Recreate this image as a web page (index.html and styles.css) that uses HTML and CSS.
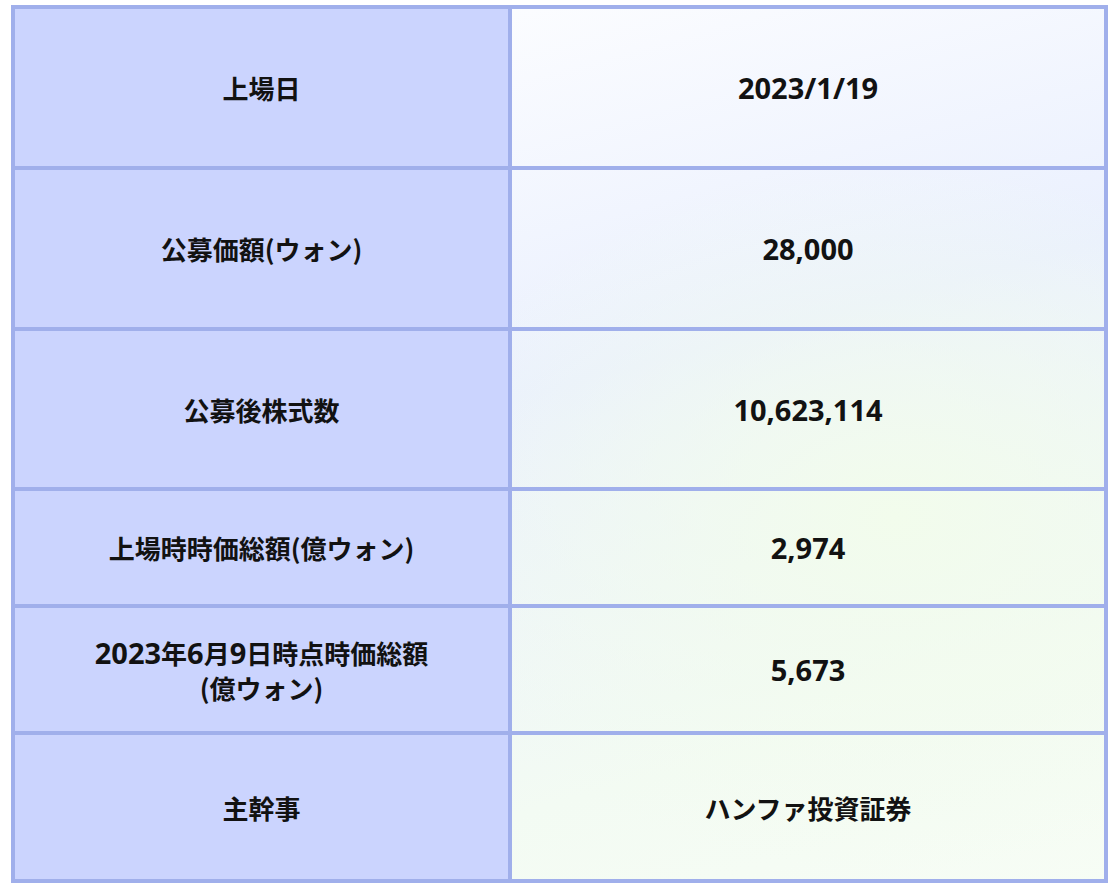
FILE: index.html
```html
<!DOCTYPE html>
<html lang="ja">
<head>
<meta charset="utf-8">
<link rel="stylesheet" href="styles.css">
</head>
<body>
<div class="table">
  <div class="cell label r1">上場日</div>
  <div class="cell value r1"><span class="lat">2023/1/19</span></div>
  <div class="cell label r2">公募価額(ウォン)</div>
  <div class="cell value r2"><span class="lat">28,000</span></div>
  <div class="cell label r3">公募後株式数</div>
  <div class="cell value r3"><span class="lat">10,623,114</span></div>
  <div class="cell label r4">上場時時価総額(億ウォン)</div>
  <div class="cell value r4"><span class="lat">2,974</span></div>
  <div class="cell label r5"><span class="lines"><span class="line"><span class="lat">2023</span>年<span class="lat">6</span>月<span class="lat">9</span>日時点時価総額</span><span class="line">(億ウォン)</span></span></div>
  <div class="cell value r5"><span class="lat">5,673</span></div>
  <div class="cell label r6">主幹事</div>
  <div class="cell value r6">ハンファ投資証券</div>
</div>
</body>
</html>
```
FILE: styles.css
```css
html, body {
  margin: 0;
  padding: 0;
  background: #ffffff;
}
body {
  padding: 5px 11px 0 11px;
  font-family: "Noto Sans CJK JP", "Noto Sans", sans-serif;
}
.table {
  width: 1097px;
  display: grid;
  grid-template-columns: 493px 592px;
  grid-template-rows: 157px 157px 156px 113px 123px 144px;
  gap: 4px;
  padding: 4px;
  box-sizing: border-box;
  background: #a0afeb;
}
.cell {
  display: flex;
  align-items: center;
  justify-content: center;
  text-align: center;
  font-size: 26px;
  font-weight: 700;
  line-height: 35px;
  color: #121212;
}
.lines {
  display: flex;
  flex-direction: column;
  align-items: center;
  gap: 0;
}
.line {
  display: block;
  height: 35px;
}
.lat {
  font-family: "Noto Sans", "Noto Sans CJK JP", sans-serif;
  font-size: 29px;
}
.label {
  background: #cbd4fe;
}
.value {
  background:
    radial-gradient(ellipse 45% 40% at 80% 58%, rgba(242, 252, 236, 1), rgba(242, 252, 236, 0)),
    linear-gradient(165deg, #ffffff 5%, #eaf0fe 45%, #f3fbf3 80%, #f7fdf5 100%);
  background-attachment: fixed;
}
```
